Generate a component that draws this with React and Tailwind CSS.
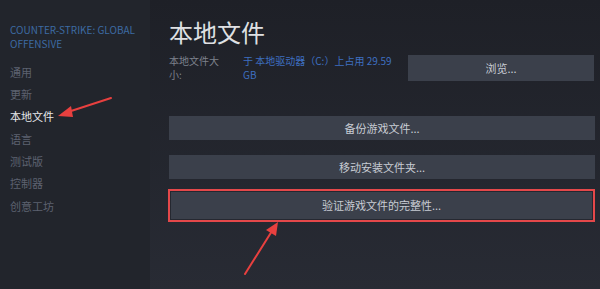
const menu = ['通用', '更新', '本地文件', '语言', '测试版', '控制器', '创意工坊'];

function Btn({ children, className = '' }) {
  return (
    <div className={`flex items-center justify-center bg-[#3b404b] text-[11px] text-[#c8ccd4] ${className}`}>
      {children}
    </div>
  );
}

export default function App() {
  return (
    <div
      className="relative flex h-[289px] w-[600px] overflow-hidden"
      style={{ fontFamily: '"Noto Sans CJK SC", "Noto Sans", sans-serif' }}
    >
      <aside className="w-[150px] shrink-0 bg-[#22252c] pl-[10px] pt-[23px]">
        <div className="text-[10px] leading-[14px] text-[#3d6ba3]">COUNTER-STRIKE: GLOBAL OFFENSIVE</div>
        <ul className="mt-[10px]">
          {menu.map((m) => (
            <li
              key={m}
              className={`flex h-[22.3px] items-center text-[11px] ${m === '本地文件' ? 'text-[#e6e7ea]' : 'text-[#5d6270]'}`}
            >
              {m}
            </li>
          ))}
        </ul>
      </aside>

      <main className="flex-1 bg-gradient-to-b from-[#1e2027] to-[#282b34] pl-[19px] pr-[8px] pt-[16px]">
        <h1 className="text-[24px] leading-[32px] text-[#dfe0e3]">本地文件</h1>
        <div className="mt-[6px] flex items-start">
          <div className="w-[56px] text-[10px] leading-[14px] text-[#7d818c]">本地文件大小:</div>
          <div className="ml-[18px] w-[156px] text-[10px] leading-[14px] text-[#3e6fc0]">
            于 本地驱动器（C:）上占用 29.59 GB
          </div>
          <Btn className="ml-[9px] mt-[1px] h-[26px] w-[186px]">浏览...</Btn>
        </div>
        <Btn className="mt-[34px] h-[24px]">备份游戏文件...</Btn>
        <Btn className="mt-[15px] h-[24px]">移动安装文件夹...</Btn>
        <div className="-ml-[1px] mt-[10px] w-[427px] border-2 border-[#e4484a] p-[1px]">
          <Btn className="h-[27px]">验证游戏文件的完整性...</Btn>
        </div>
      </main>

      <svg className="pointer-events-none absolute left-0 top-0" width="600" height="289">
        <line x1="111" y1="98" x2="68" y2="112" stroke="#e8403f" strokeWidth="2" strokeLinecap="round" />
        <polygon points="58,116 71,106 73,117" fill="#e8403f" />
        <line x1="245" y1="274" x2="272" y2="231" stroke="#e8403f" strokeWidth="2" strokeLinecap="round" />
        <polygon points="278,222 266,230 276,236" fill="#e8403f" />
      </svg>
    </div>
  );
}
